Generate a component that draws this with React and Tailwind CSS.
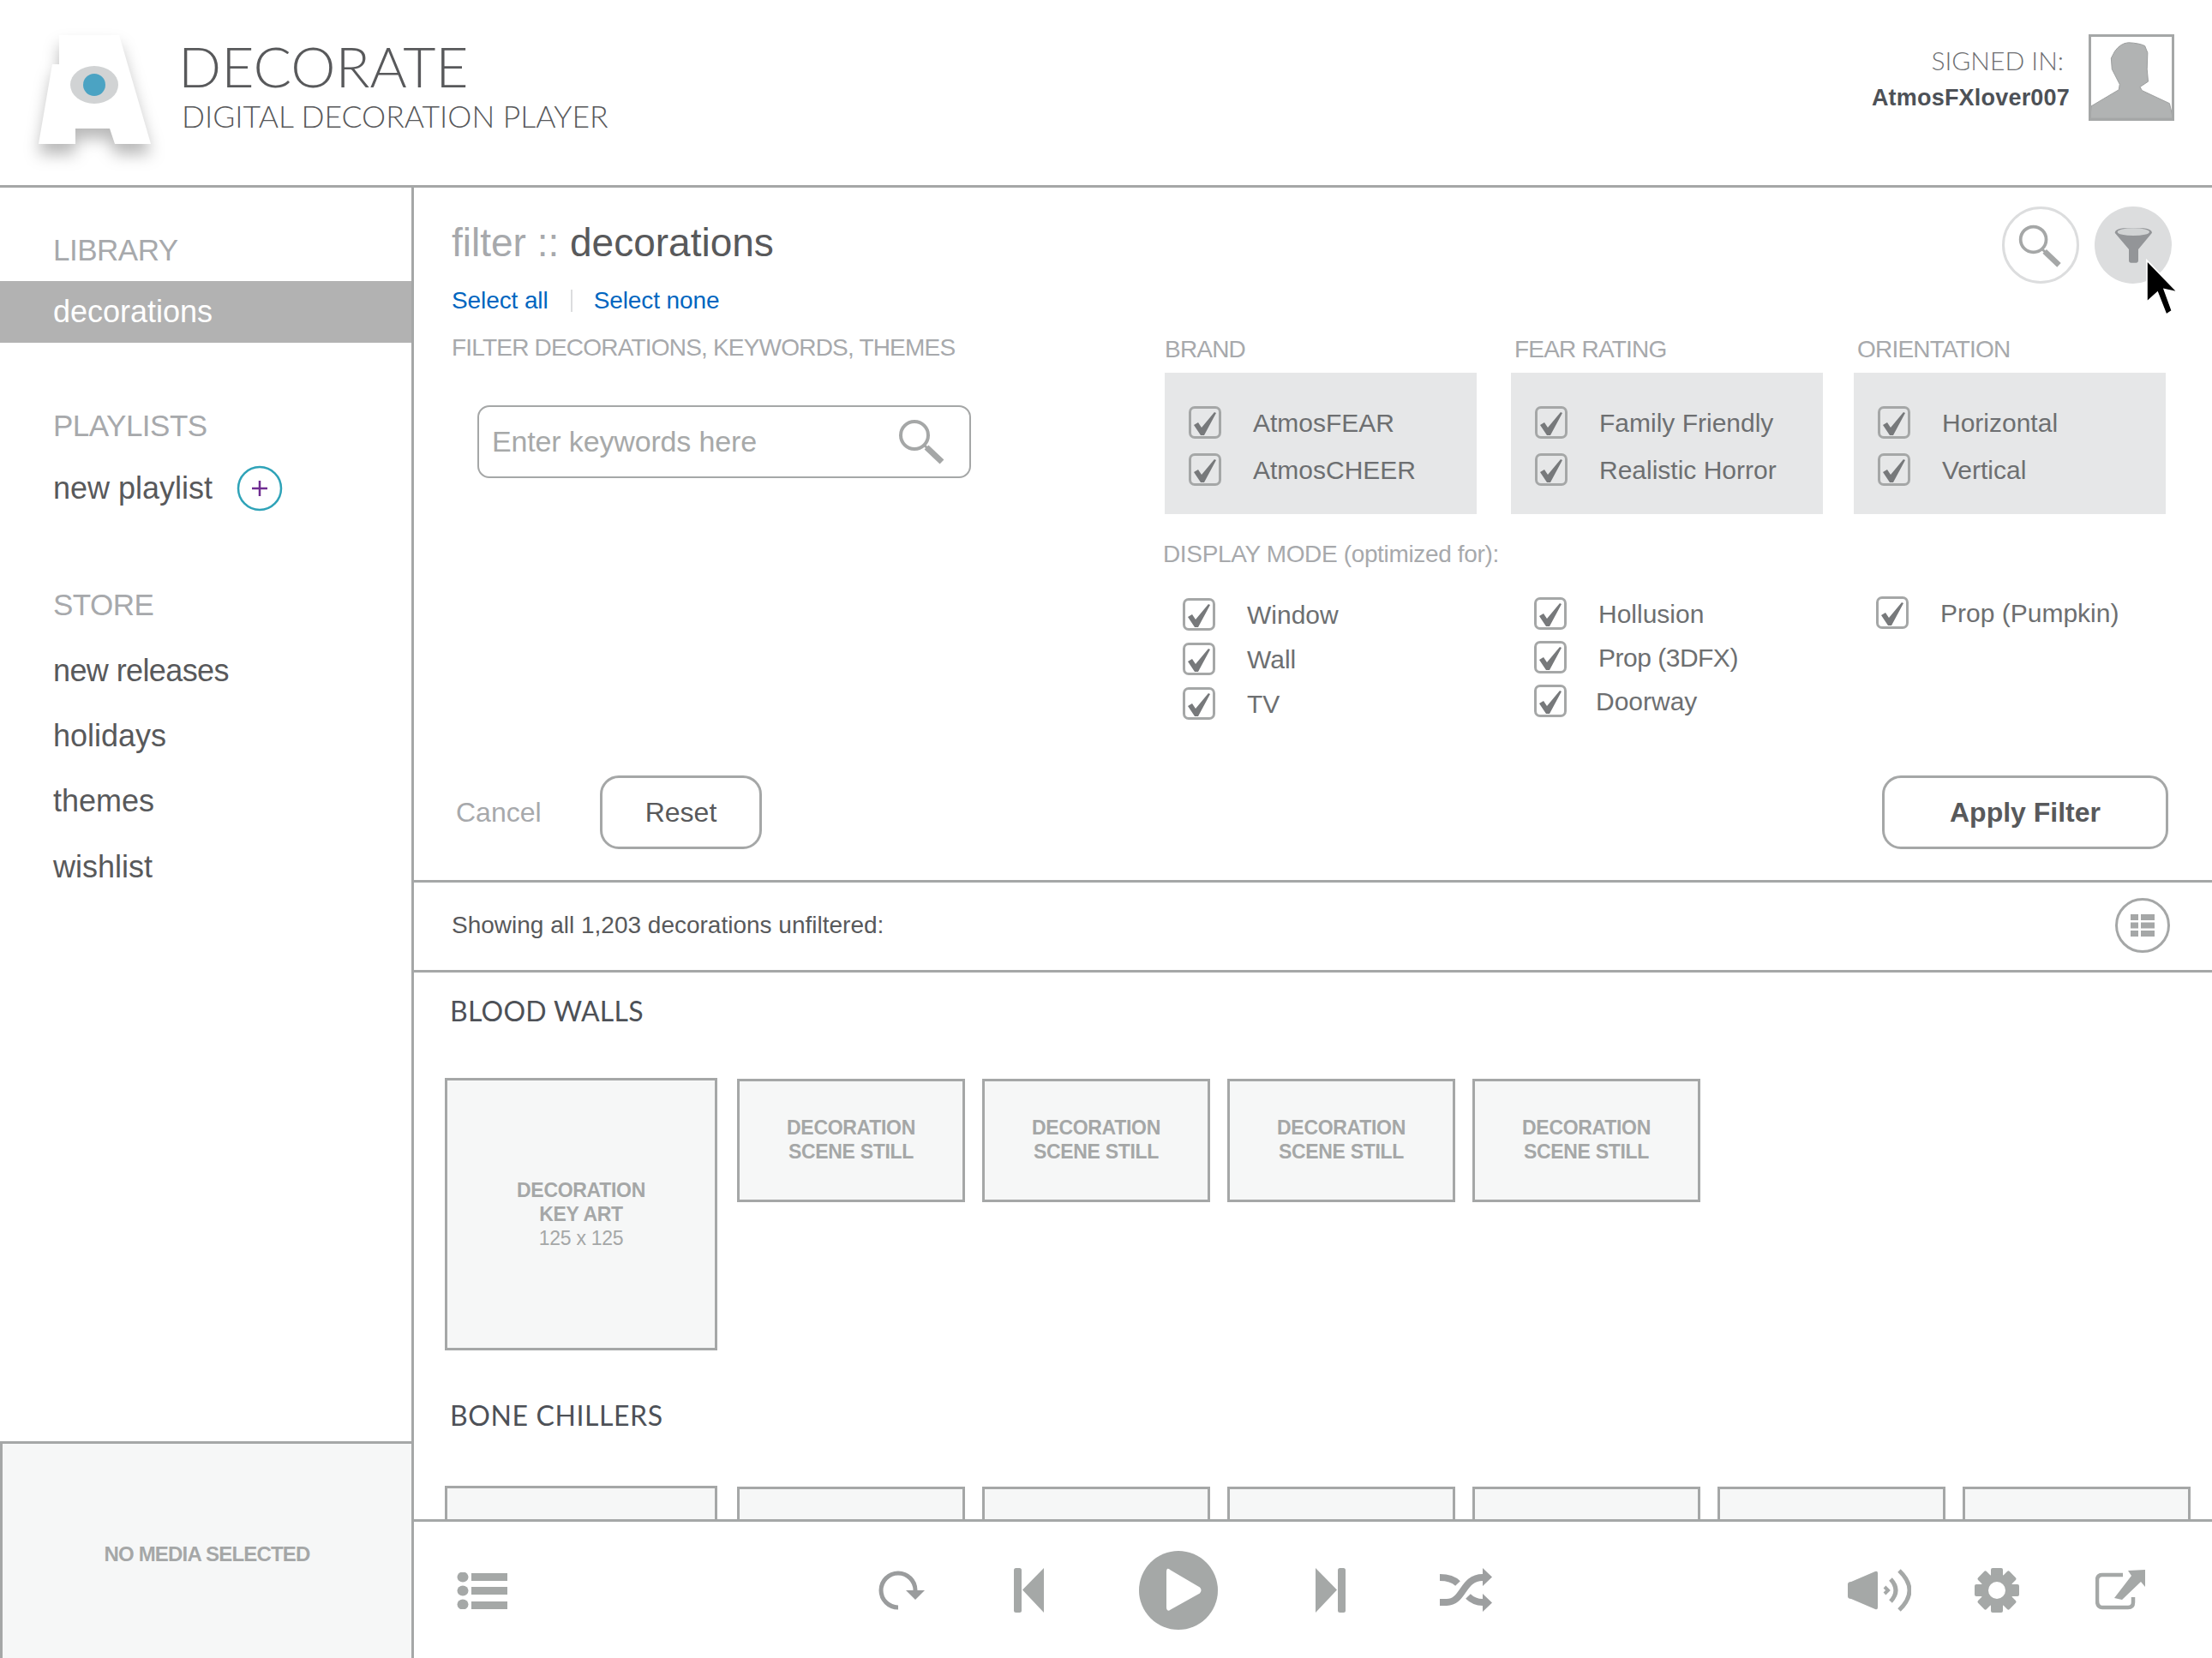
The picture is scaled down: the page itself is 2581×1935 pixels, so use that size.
import React from 'react';

const LINE = 'border-[#a5a7a7]';

function Logo() {
  return (
    <svg viewBox="0 0 190 170" className="w-[190px] h-[170px] ml-[20px] mt-[26px] shrink-0 [filter:drop-shadow(0_12px_9px_rgba(0,0,0,0.28))]">
      <path d="M49 15 H119 L156 142 H114 L108 124 H68 L68 142 H25 L41 49 H49 Z" fill="#ffffff" />
      <ellipse cx="90" cy="73" rx="28" ry="22" fill="#d1d3d4" />
      <ellipse cx="90" cy="73" rx="13" ry="13" fill="#4ba3c3" />
    </svg>
  );
}

function Avatar() {
  return (
    <div className={`w-[100px] h-[101px] border-[3px] ${LINE} bg-white overflow-hidden shrink-0`}>
      <svg viewBox="3 3 294 295" className="w-full h-full block">
        <path
          d="M76 80 L89 55 Q110 25 139 23 Q180 25 199 35 L209 60 L207 120 L211 165 L181 185 L189 198 L289 245 L302 300 L0 300 L3 255 L104 195 L107 175 L79 120 Z"
          fill="#b1b3b3"
          stroke="#9a9c9c"
          strokeWidth="3"
        />
      </svg>
    </div>
  );
}

function Header() {
  return (
    <header className={`h-[219px] border-b-[3px] ${LINE} flex shrink-0`}>
      <Logo />
      <div className="-ml-[2px] pt-[41px] font-['Lato',sans-serif] font-light text-[#58595b]">
        <div className="text-[66px] leading-[72px]">DECORATE</div>
        <div className="text-[35.500px] leading-[50px] -mt-[2px] pl-[4px]">DIGITAL DECORATION PLAYER</div>
      </div>
      <div className="ml-auto flex pt-[40px] pr-[44px]">
        <div className="text-right mr-[22px]">
          <div className="font-['Lato',sans-serif] font-light text-[30px] leading-[40px] pr-[7px] mt-[10px] text-[#6d6e71]">SIGNED IN:</div>
          <div className="font-bold text-[27px] tracking-[0.2px] leading-[40px] mt-[4px] text-[#4d5157]">AtmosFXlover007</div>
        </div>
        <Avatar />
      </div>
    </header>
  );
}

function NavHead({ children, className = '' }) {
  return <div className={`h-[50px] flex items-center text-[35px] tracking-[-0.5px] text-[#a7a9ac] pl-[62px] ${className}`}>{children}</div>;
}

function NavItem({ children, className = '' }) {
  return <div className={`h-[50px] flex items-center text-[36px] text-[#58595b] pl-[62px] ${className}`}>{children}</div>;
}

function Sidebar() {
  return (
    <aside className={`w-[483px] shrink-0 border-r-[3px] ${LINE} flex flex-col`}>
      <NavHead className="mt-[48px]">LIBRARY</NavHead>
      <div className="mt-[11px] h-[72px] bg-[#b2b2b2] text-white text-[36px] flex items-center pl-[62px]">decorations</div>
      <NavHead className="mt-[72px]">PLAYLISTS</NavHead>
      <NavItem className="mt-[23px]">
        new playlist
        <svg viewBox="0 0 54 54" className="w-[54px] h-[54px] ml-[28px]">
          <circle cx="27" cy="27" r="25" fill="none" stroke="#2fa3b8" strokeWidth="2.5" />
          <path d="M18 27 H36 M27 18 V36" stroke="#6f2c91" strokeWidth="2.5" />
        </svg>
      </NavItem>
      <NavHead className="mt-[86px]">STORE</NavHead>
      <NavItem className="mt-[27px] tracking-[-0.6px]">new releases</NavItem>
      <NavItem className="mt-[26px]">holidays</NavItem>
      <NavItem className="mt-[26px]">themes</NavItem>
      <NavItem className="mt-[27px]">wishlist</NavItem>
      <div className={`mt-auto h-[253px] bg-[#f6f7f7] border-t-[3px] border-l-[3px] ${LINE} flex items-center justify-center pt-[7px] font-bold text-[24px] tracking-[-0.8px] text-[#a5a7a7]`}>
        NO MEDIA SELECTED
      </div>
    </aside>
  );
}

function Check({ label, gap = 'ml-[37px]', text = '' }) {
  return (
    <div className="flex items-center h-[38px]">
      <div className="w-[38px] h-[38px] rounded-[7px] border-[3px] border-[#a5a7a7] shrink-0">
        <svg viewBox="0 0 32 32" className="w-full h-full block">
          <path d="M3 19 L8 16 L12 22 L27 4 L29 5 L15 31 L11 31 Z" fill="#77797b" />
        </svg>
      </div>
      <span className={`${gap} text-[30px] text-[#6d6f71] ${text}`}>{label}</span>
    </div>
  );
}

function CheckPanel({ title, items, labelClass = '' }) {
  return (
    <div>
      <div className={`h-[64px] pt-[10px] flex items-center text-[28px] tracking-[-0.8px] text-[#a7a9ac] ${labelClass}`}>{title}</div>
      <div className="h-[165px] bg-[#e6e7e8] pl-[28px] pt-[39px] flex flex-col gap-[17px]">
        {items.map((i) => <Check key={i} label={i} />)}
      </div>
    </div>
  );
}

function MagnifierBig() {
  return (
    <svg viewBox="0 0 90 90" className="w-full h-full block">
      <circle cx="36" cy="38" r="16" fill="none" stroke="#a5a7a7" strokeWidth="4" />
      <path d="M47 50 L51 54" stroke="#a5a7a7" strokeWidth="3" />
      <path d="M50 53 L68 70" stroke="#a5a7a7" strokeWidth="7" />
    </svg>
  );
}

function Cursor() {
  return (
    <svg viewBox="0 0 46 70" className="absolute left-[2014px] top-[77px] w-[52px] h-[79px]">
      <path d="M7 7 V50 L18 40 L27 63 L33 59 L25 37 L39 40 Z" fill="#000000" stroke="#ffffff" strokeWidth="1.5" />
    </svg>
  );
}

function FilterPanel() {
  return (
    <section className={`relative h-[811px] shrink-0 border-b-[3px] ${LINE} pl-[44px] pr-[47px] flex flex-col`}>
      <div className="flex justify-between pt-[22px]">
        <div className="h-[84px] flex items-center text-[46px] text-[#a7a9ac]">
          filter ::&nbsp;<span className="text-[#58595b]">decorations</span>
        </div>
        <div className="flex gap-[18px]">
          <div className="w-[90px] h-[90px] rounded-full border-[3px] border-[#dcddde]">
            <MagnifierBig />
          </div>
          <div className="w-[90px] h-[90px] rounded-full bg-[#dcddde]">
            <svg viewBox="0 0 270 270" className="w-full h-full block">
              <path d="M71 92 Q71 80 100 76 H172 Q201 80 201 92 L153 150 V188 Q153 197 145 197 H128 Q120 197 120 188 V150 Z" fill="#939598" />
              <ellipse cx="136" cy="89" rx="56" ry="13" fill="#d1d3d4" />
            </svg>
          </div>
        </div>
      </div>
      <div className="h-[40px] flex items-center text-[28px] tracking-[-0.1px] text-[#0066c0]">
        Select all
        <span className="w-[2px] h-[26px] bg-[#dcddde] ml-[26px] mr-[25px]" />
        Select none
      </div>
      <div className="flex flex-1">
        <div className="w-[832px] shrink-0">
          <div className="h-[70px] flex items-center text-[28px] tracking-[-0.8px] text-[#a7a9ac]">FILTER DECORATIONS, KEYWORDS, THEMES</div>
          <div className="mt-[32px] ml-[30px] w-[576px] h-[85px] rounded-[14px] border-2 border-[#a5a7a7] flex items-center justify-between pl-[15px] pr-[29px]">
            <span className="text-[34px] tracking-[-0.15px] text-[#a7a9a9]">Enter keywords here</span>
            <svg viewBox="0 0 54 52" className="w-[54px] h-[52px]">
              <circle cx="19" cy="18" r="16" fill="none" stroke="#a5a7a7" strokeWidth="4" />
              <path d="M31 30 L34 33" stroke="#a5a7a7" strokeWidth="3" />
              <path d="M33 32 L51 49" stroke="#a5a7a7" strokeWidth="7" />
            </svg>
          </div>
        </div>
        <div className="flex-1">
          <div className="flex">
            <div className="w-[364px]"><CheckPanel title="BRAND" items={['AtmosFEAR', 'AtmosCHEER']} /></div>
            <div className="w-[364px] ml-[40px]"><CheckPanel title="FEAR RATING" items={['Family Friendly', 'Realistic Horror']} labelClass="pl-[4px]" /></div>
            <div className="w-[364px] ml-[36px]"><CheckPanel title="ORIENTATION" items={['Horizontal', 'Vertical']} labelClass="pl-[4px]" /></div>
          </div>
          <div className="mt-[27px] h-[40px] -ml-[2px] flex items-center text-[28px] tracking-[-0.35px] text-[#a7a9ac]">DISPLAY MODE (optimized for):</div>
          <div className="mt-[31px] pl-[21px] flex">
            <div className="w-[410px] flex flex-col gap-[14px]">
              <Check label="Window" />
              <Check label="Wall" />
              <Check label="TV" />
            </div>
            <div className="w-[399px] flex flex-col gap-[13px] -mt-[1px]">
              <Check label="Hollusion" />
              <Check label="Prop (3DFX)" text="tracking-[-0.5px]" />
              <Check label="Doorway" gap="ml-[34px]" />
            </div>
            <div className="-mt-[2px]"><Check label="Prop (Pumpkin)" /></div>
          </div>
        </div>
      </div>
      <div className="flex items-center pb-[36px] pl-[5px] pr-[4px] text-[32px]">
        <span className="text-[#a7a9ac] w-[168px]">Cancel</span>
        <div className={`w-[189px] h-[86px] rounded-[22px] border-[3px] ${LINE} flex items-center justify-center text-[#58595b]`}>Reset</div>
        <div className={`ml-auto w-[334px] h-[86px] rounded-[22px] border-[3px] ${LINE} flex items-center justify-center font-bold text-[#58595b]`}>Apply Filter</div>
      </div>
      <Cursor />
    </section>
  );
}

function ResultBar() {
  return (
    <div className={`h-[105px] shrink-0 border-b-[3px] ${LINE} pl-[44px] pr-[49px] pb-[2px] flex items-center justify-between`}>
      <span className="text-[28px] text-[#58595b]">Showing all 1,203 decorations unfiltered:</span>
      <div className={`w-[64px] h-[64px] rounded-full border-[3px] ${LINE} flex items-center justify-center`}>
        <svg viewBox="0 0 28 26" className="w-[28px] h-[26px]" fill="#a5a7a7">
          <path d="M0 0 H9 V7 H0 Z M12 0 H28 V7 H12 Z M0 9.5 H9 V16.500 H0 Z M12 9.5 H28 V16.500 H12 Z M0 19 H9 V26 H0 Z M12 19 H28 V26 H12 Z" />
        </svg>
      </div>
    </div>
  );
}

function Tile({ big = false, lines = [], sub }) {
  const size = big ? 'w-[318px] h-[318px]' : 'w-[266px] h-[144px] pb-[2px]';
  return (
    <div className={`${size} shrink-0 bg-[#f6f7f7] border-[3px] ${LINE} flex flex-col items-center justify-center text-[23px] leading-[28px] tracking-[-0.3px] font-bold text-[#a5a7a7]`}>
      {lines.map((l) => <div key={l}>{l}</div>)}
      {sub && <div className="font-normal">{sub}</div>}
    </div>
  );
}

const SCENE = ['DECORATION', 'SCENE STILL'];

// the second shelf is cut off by the player bar above its captions, so its tiles stay empty
function Shelf({ title, count, captions = true, className = '', headClass = 'mb-[58px] tracking-[0.25px]' }) {
  return (
    <div className={className}>
      <div className={`h-[40px] flex items-center pl-[6px] font-['Lato',sans-serif] text-[32px] text-[#4d5157] ${headClass}`}>{title}</div>
      <div className="flex items-start">
        <Tile big lines={captions ? ['DECORATION', 'KEY ART'] : []} sub={captions ? '125 x 125' : undefined} />
        <div className="flex gap-[20px] ml-[23px] pt-[1px]">
          {Array.from({ length: count }).map((_, i) => <Tile key={i} lines={captions ? SCENE : []} />)}
        </div>
      </div>
    </div>
  );
}

function Player() {
  const c = '#a5a8a7';
  return (
    <div className={`h-[162px] shrink-0 border-t-[3px] ${LINE} bg-white flex items-center pl-[50px] pt-[1px]`}>
      <svg viewBox="0 0 60 43" className="w-[60px] h-[43px]" fill={c}>
        <ellipse cx="7" cy="5.500" rx="6.500" ry="6" />
        <ellipse cx="7" cy="21.500" rx="6.500" ry="6" />
        <ellipse cx="7" cy="37.500" rx="6.500" ry="6" />
        <path d="M17 1 H59 V10 H17 Z M17 17 H59 V26 H17 Z M17 34 H59 V43 H17 Z" />
      </svg>
      <svg viewBox="0 0 56 50" className="w-[56px] h-[50px] ml-[432px]">
        <path d="M23 45 A20 20 0 1 1 43 25" fill="none" stroke="#9a9c9d" strokeWidth="5" />
        <path d="M32 25 H54 L43 36 Z" fill="#9a9c9d" />
      </svg>
      <svg viewBox="0 0 36 52" className="w-[36px] h-[52px] ml-[102px]" fill={c}>
        <rect x="0" y="0" width="9" height="52" rx="2.500" />
        <path d="M10 25.500 L35 0 V52 Z" />
      </svg>
      <svg viewBox="0 0 92 92" className="w-[92px] h-[92px] ml-[110px]">
        <circle cx="46" cy="46" r="46" fill={c} />
        <path d="M33 24 Q33 20 36 23 L70 43 Q73 46 70 49 L36 68 Q33 70 33 66 Z" fill="#ffffff" stroke="#ffffff" strokeWidth="2" strokeLinejoin="round" />
      </svg>
      <svg viewBox="0 0 36 52" className="w-[36px] h-[52px] ml-[114px]" fill={c}>
        <path d="M0 0 L25 25.500 L0 52 Z" />
        <rect x="26" y="0" width="9" height="52" rx="2.500" />
      </svg>
      <svg viewBox="0 0 64 56" className="w-[64px] h-[56px] ml-[109px]" fill="none" stroke="#9d9fa0" strokeWidth="8">
        <path d="M0 42 H8 C28 42 26 13 50 13" />
        <path d="M0 13 C10 13 16 15 21 20" />
        <path d="M33 35 C38 40 43 42 50 42" />
        <path d="M50 2 L61 12.500 L50 23 Z M50 32 L61 42.500 L50 53 Z" fill="#9d9fa0" stroke="none" />
      </svg>
      <svg viewBox="0 0 74 52" className="w-[74px] h-[52px] ml-[412px]">
        <path d="M0 19 Q0 16 4 16 L32 4 Q35 3 35 6 V46 Q35 49 32 48 L4 36 Q0 36 0 33 Z" fill={c} />
        <path d="M43 22 L47 26 L43 30" fill="none" stroke={c} strokeWidth="4" />
        <path d="M50 13 Q62 26 50 39" fill="none" stroke={c} strokeWidth="5" />
        <path d="M60 3 Q84 26 60 49" fill="none" stroke={c} strokeWidth="5" />
      </svg>
      <svg viewBox="0 0 52 52" className="w-[52px] h-[52px] ml-[74px]" fill={c}>
        {[0, 45, 90, 135].map((a) => (
          <rect key={a} x="19" y="0" width="14" height="52" rx="2" transform={`rotate(${a} 26 26)`} />
        ))}
        <circle cx="26" cy="26" r="19" />
        <circle cx="26" cy="26" r="10" fill="#ffffff" />
      </svg>
      <svg viewBox="0 0 60 48" className="w-[60px] h-[48px] ml-[89px]">
        <path d="M32 6 H8 Q2 6 2 12 V36 Q2 44 8 44 H38 Q44 44 44 38 V32" fill="none" stroke={c} strokeWidth="4.500" />
        <path d="M22 33 L42 7 L38 1 L58 0 V20 L53 14 L31 35 Z" fill={c} />
      </svg>
    </div>
  );
}

export default function App() {
  return (
    <div className="w-[2581px] h-[1935px] overflow-hidden bg-white flex flex-col font-['Liberation_Sans',sans-serif]">
      <Header />
      <div className="flex flex-1 min-h-0">
        <Sidebar />
        <main className="flex-1 min-w-0 flex flex-col">
          <FilterPanel />
          <ResultBar />
          <div className="flex-1 min-h-0 overflow-hidden pl-[36px] pt-[25px]">
            <Shelf title="BLOOD WALLS" count={4} />
            <Shelf title="BONE CHILLERS" count={6} captions={false} className="mt-[56px]" headClass="mb-[62px] tracking-[0.6px]" />
          </div>
          <Player />
        </main>
      </div>
    </div>
  );
}
